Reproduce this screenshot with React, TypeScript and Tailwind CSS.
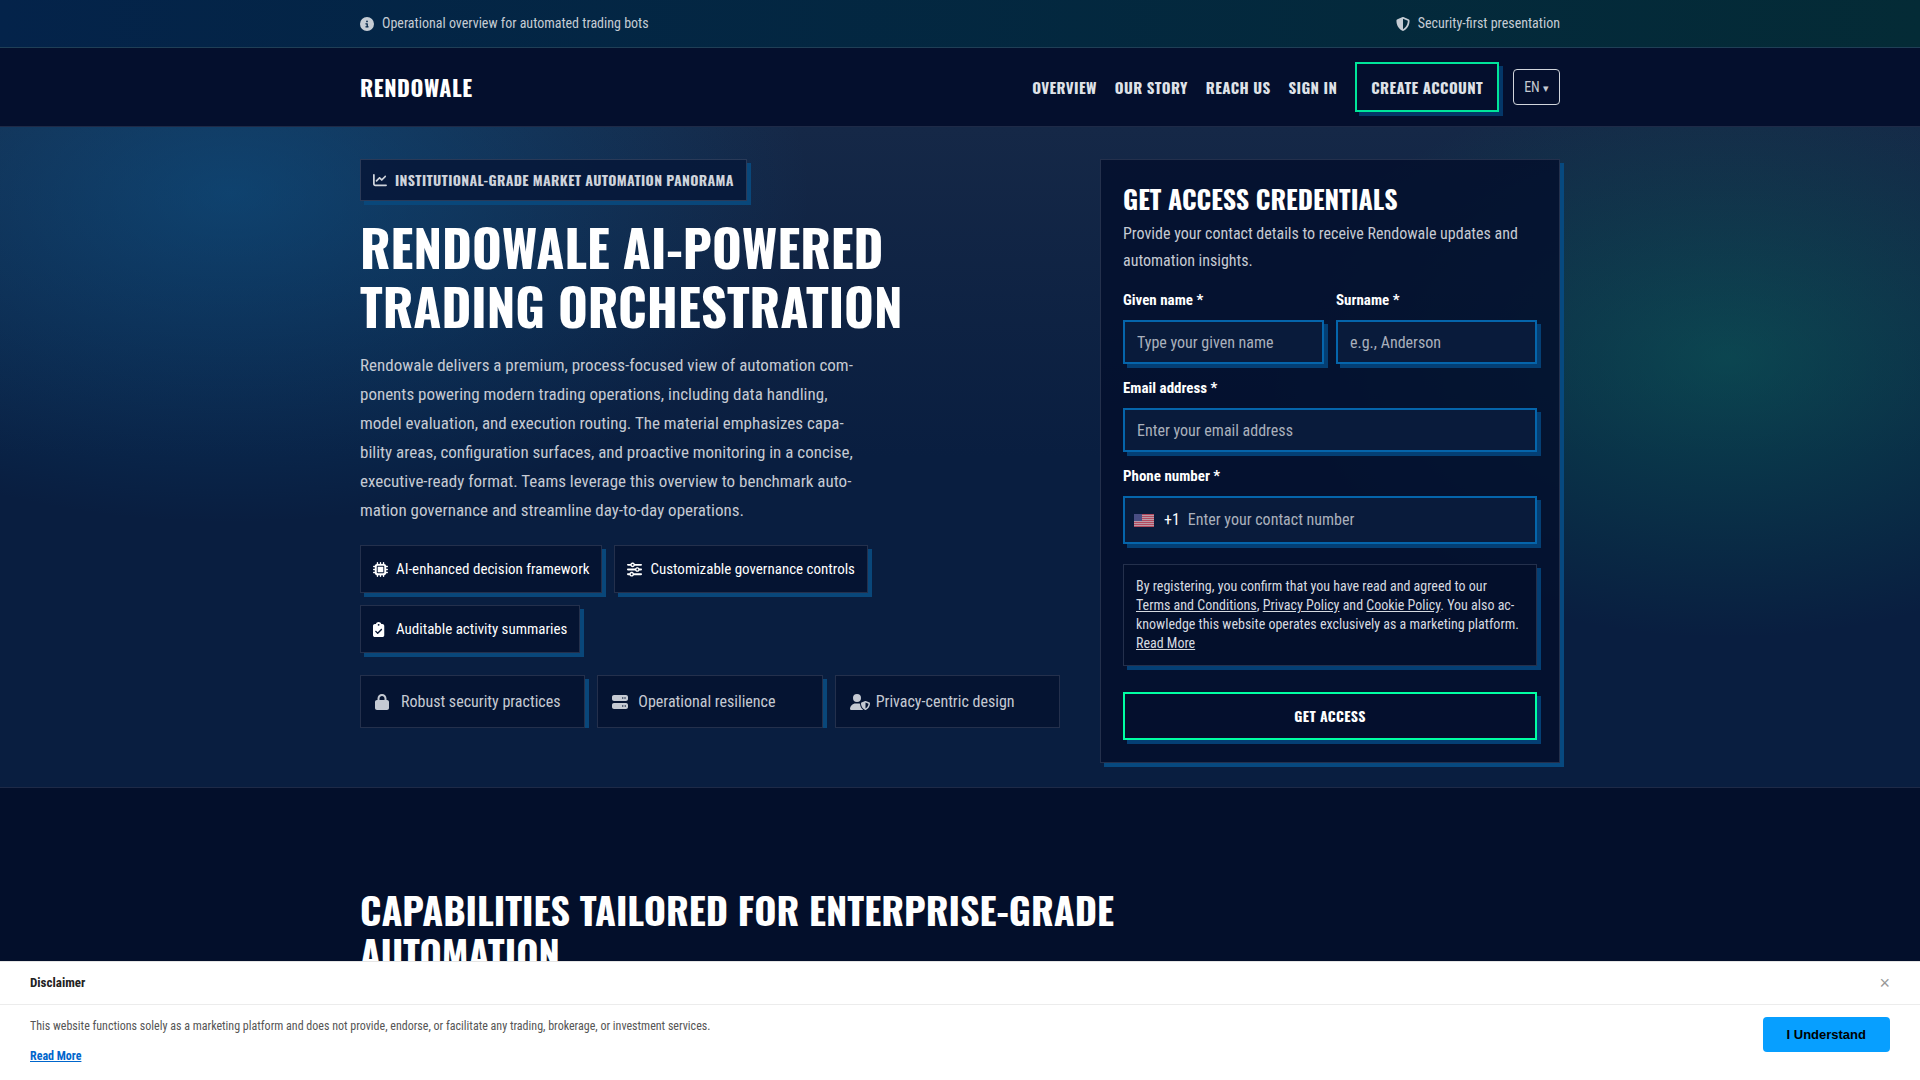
import { FaChartLine, FaCircleInfo, FaClipboardCheck, FaLock, FaMicrochip, FaServer, FaShieldHalved, FaSliders, FaUserShield } from "react-icons/fa6";

const navLinks = ["Overview", "Our story", "Reach us", "Sign in"];

const chips = [
  { icon: FaMicrochip, size: "h-[15px] w-[15px]", label: "AI-enhanced decision framework" },
  { icon: FaSliders, size: "h-[15px] w-[15px]", label: "Customizable governance controls" },
  { icon: FaClipboardCheck, size: "h-[15px] w-3", label: "Auditable activity summaries" },
];

const perks = [
  { icon: FaLock, size: "h-4 w-[14px]", label: "Robust security practices" },
  { icon: FaServer, size: "h-4 w-4", label: "Operational resilience" },
  { icon: FaUserShield, size: "h-4 w-5", label: "Privacy-centric design" },
];

const display = "font-['Oswald','Roboto_Condensed','Liberation_Sans_Narrow',sans-serif] uppercase";
const navText = "text-[15px] leading-[22px] font-bold tracking-wide text-[#dfe2e8]";
const shadow = "shadow-[4px_4px_0_#09477a]";
const field =
  "w-full border-2 border-[#0565ab] bg-[#091b3b] text-base text-white outline-none placeholder:text-[#a9b0bc] shadow-[4px_4px_0_#043f74]";
const label = "text-[15px] leading-6 font-bold text-white";

function UsFlag() {
  return (
    <svg width="20" height="13" viewBox="0 0 20 13" className="opacity-75">
      <rect width="20" height="13" fill="#f6c3ca" />
      {[0, 2, 4, 6, 8, 10, 12].map((y) => (
        <rect key={y} y={y} width="20" height="1" fill="#ea5a6c" />
      ))}
      <rect width="8" height="7" fill="#5f5f9c" />
    </svg>
  );
}

function TopBar() {
  return (
    <div className="border-b border-[#203f56] bg-linear-to-r from-[#04234a] to-[#042b36] text-sm leading-[23px] text-[#c5ccd4]">
      <div className="mx-auto flex max-w-[1200px] items-center justify-between py-3">
        <span className="flex items-center gap-2">
          <FaCircleInfo size={14} />
          Operational overview for automated trading bots
        </span>
        <span className="flex items-center gap-2">
          <FaShieldHalved size={14} />
          Security-first presentation
        </span>
      </div>
    </div>
  );
}

function Header() {
  return (
    <header className="border-b border-[#1e2a47] bg-[#040f2d]">
      <div className="mx-auto flex max-w-[1200px] items-center justify-between py-[14px]">
        <a href="#" className={`${display} text-[22px] leading-8 font-bold tracking-wide`}>
          Rendowale
        </a>
        <div className="flex items-center gap-[14px]">
          <nav className="flex items-center gap-[18px]">
            {navLinks.map((item) => (
              <a key={item} href="#" className={`${display} ${navText}`}>
                {item}
              </a>
            ))}
            <a href="#" className={`${display} ${navText} border-2 border-[#00e59a] px-[14px] py-3 shadow-[4px_4px_0_#043768]`}>
              Create account
            </a>
          </nav>
          <button type="button" className="h-9 rounded border border-[#d1d5db] px-[10px] text-sm text-[#c5cad3]">
            EN <span className="text-[11px]">▾</span>
          </button>
        </div>
      </div>
    </header>
  );
}

function AccessForm() {
  return (
    <form className="flex flex-col self-start border border-[#24304c] bg-[#040f2d]/85 p-[22px] shadow-[4px_4px_0_#07497f]">
      <h2 className={`${display} mb-1 text-[26px] leading-[34px] font-bold`}>Get access credentials</h2>
      <p className="mb-[14px] text-base leading-[27px] text-[#c5cad3]">
        Provide your contact details to receive Rendowale updates and automation insights.
      </p>
      <div className="grid grid-cols-2 gap-3">
        <div className="flex flex-col gap-2">
          <label htmlFor="given" className={label}>Given name *</label>
          <input id="given" placeholder="Type your given name" className={`${field} h-11 px-3`} />
        </div>
        <div className="flex flex-col gap-2">
          <label htmlFor="surname" className={label}>Surname *</label>
          <input id="surname" placeholder="e.g., Anderson" className={`${field} h-11 px-3`} />
        </div>
        <div className="col-span-2 flex flex-col gap-2">
          <label htmlFor="email" className={label}>Email address *</label>
          <input id="email" type="email" placeholder="Enter your email address" className={`${field} h-11 px-3`} />
        </div>
        <div className="col-span-2 flex flex-col gap-2">
          <label htmlFor="phone" className={label}>Phone number *</label>
          <div className={`${field} flex h-12 items-center px-[9px]`}>
            <UsFlag />
            <span className="mr-2 ml-[10px]">+1</span>
            <input
              id="phone"
              type="tel"
              placeholder="Enter your contact number"
              className="min-w-0 flex-1 bg-transparent outline-none placeholder:text-[#a9b0bc]"
            />
          </div>
        </div>
      </div>
      <p className="mt-5 border border-[#24304c] bg-[#030f2b] p-3 text-sm leading-[19px] text-[#d6dae0] shadow-[4px_4px_0_#043f74]">
        By registering, you confirm that you have read and agreed to our <a href="#" className="underline">Terms and Conditions</a>,{" "}
        <a href="#" className="underline">Privacy Policy</a> and <a href="#" className="underline">Cookie Policy</a>. You also ac&shy;knowledge this
        website operates exclusively as a marketing platform. <a href="#" className="underline">Read More</a>
      </p>
      <button
        type="submit"
        className={`${display} mt-[26px] h-12 border-2 border-[#00ffa3] bg-[#040f2d] text-sm font-bold tracking-wide shadow-[4px_4px_0_#043f74]`}
      >
        Get access
      </button>
    </form>
  );
}

function Hero() {
  return (
    <section className="border-b border-[#1e2a47] bg-[radial-gradient(580px_330px_at_12%_10%,rgba(10,100,160,0.45),transparent),radial-gradient(460px_280px_at_90%_35%,rgba(10,120,100,0.42),transparent),linear-gradient(180deg,#152847,#091e40_50%,#091e40)]">
      <div className="mx-auto grid max-w-[1200px] grid-cols-[1fr_460px] gap-10 pt-8 pb-6">
        <div className="min-w-0">
          <span className={`${display} ${shadow} inline-flex h-[42px] items-center gap-2 border border-[#2a3a58] bg-[#07183a]/90 px-3 text-sm font-bold tracking-wide text-[#cfd4dc]`}>
            <FaChartLine size={14} />
            Institutional-grade market automation panorama
          </span>
          <h1 className={`${display} mt-4 text-[51px] leading-[59px] font-bold`}>
            Rendowale AI-powered trading orchestration
          </h1>
          <p className="mt-4 max-w-[500px] text-[17px] leading-[29px] text-[#c5cad3]">
            Rendowale delivers a premium, process-focused view of automation com&shy;ponents powering modern trading operations, including data
            handling, model evaluation, and execution routing. The material emphasizes capa&shy;bility areas, configuration surfaces, and
            proactive monitoring in a concise, executive-ready format. Teams leverage this overview to benchmark auto&shy;mation governance and
            streamline day-to-day operations.
          </p>
          <ul className="mt-5 flex flex-wrap gap-3">
            {chips.map(({ icon: Icon, size, label }) => (
              <li key={label} className={`${shadow} flex h-12 items-center gap-2 border border-[#24304c] bg-[#051432] px-3 text-[15px]`}>
                <span className="w-[15px] shrink-0">
                  <Icon className={size} preserveAspectRatio="xMinYMid meet" />
                </span>
                {label}
              </li>
            ))}
          </ul>
          <ul className="mt-[22px] grid grid-cols-3 gap-3 overflow-hidden">
            {perks.map(({ icon: Icon, size, label }) => (
              <li key={label} className={`${shadow} flex h-[53px] items-center border border-[#24304c] bg-[#051432] pl-[14px] text-base text-[#c5cad3]`}>
                <span className="w-[26px] shrink-0">
                  <Icon className={size} />
                </span>
                {label}
              </li>
            ))}
          </ul>
        </div>
        <AccessForm />
      </div>
    </section>
  );
}

function Disclaimer() {
  return (
    <aside className="fixed inset-x-0 bottom-0 border-t border-[#e5e5e5] bg-white text-[#555]">
      <div className="flex h-[43px] items-center justify-between border-b border-[#ececec] px-[30px]">
        <strong className="text-[13px] text-[#222]">Disclaimer</strong>
        <button type="button" aria-label="Close" className="font-['Liberation_Sans',sans-serif] text-lg text-[#999]">×</button>
      </div>
      <div className="flex items-start justify-between px-[30px] pt-3 pb-[15px]">
        <div className="text-xs leading-[18px]">
          <p>This website functions solely as a marketing platform and does not provide, endorse, or facilitate any trading, brokerage, or investment services.</p>
          <a href="#" className="mt-3 inline-block font-bold text-[#0066cc] underline">Read More</a>
        </div>
        <button type="button" className="h-[35px] rounded bg-[#079fff] px-6 font-['Liberation_Sans',sans-serif] text-[13px] font-bold text-black">
          I Understand
        </button>
      </div>
    </aside>
  );
}

export default function App() {
  return (
    <div className="h-screen overflow-hidden bg-[#030f2b] font-['Roboto_Condensed','Liberation_Sans_Narrow',sans-serif] text-white">
      <TopBar />
      <Header />
      <main>
        <Hero />
        <section className="mx-auto max-w-[1200px] pt-[100px]">
          <h2 className={`${display} max-w-[800px] text-[38px] leading-[43px] font-bold`}>
            Capabilities tailored for enterprise-grade automation
          </h2>
        </section>
      </main>
      <Disclaimer />
    </div>
  );
}
